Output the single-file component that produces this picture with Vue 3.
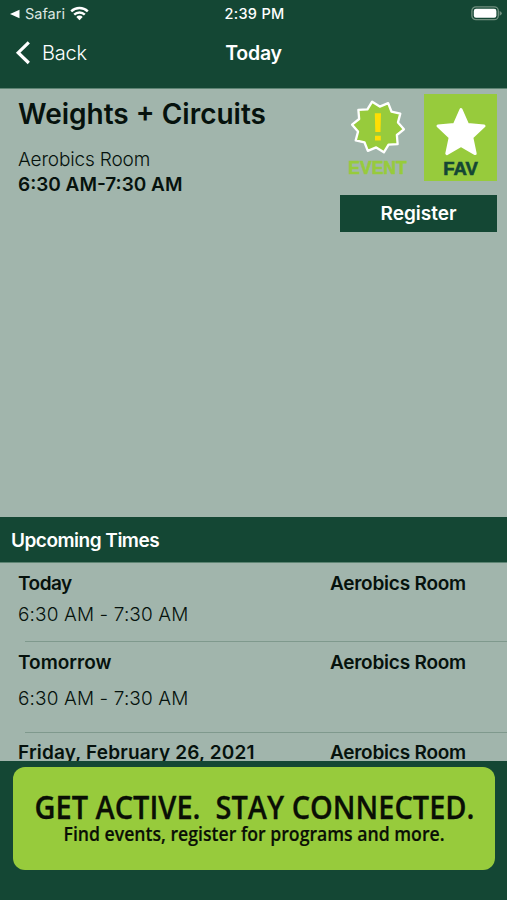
<script setup>
const times = [
  { day: 'Today', hours: '6:30 AM - 7:30 AM', room: 'Aerobics Room', kind: 'first' },
  { day: 'Tomorrow', hours: '6:30 AM - 7:30 AM', room: 'Aerobics Room', kind: 'second' },
  { day: 'Friday, February 26, 2021', hours: '6:30 AM - 7:30 AM', room: 'Aerobics Room', kind: 'third' },
]

// Ten-pointed badge outline
const burst = Array.from({ length: 20 }, (_, i) => {
  const r = i % 2 ? 20.5 : 26
  const a = ((i * 18 - 103) * Math.PI) / 180
  return `${(30 + r * Math.cos(a)).toFixed(2)},${(30 + r * Math.sin(a)).toFixed(2)}`
}).join(' ')
</script>

<template>
  <div class="screen">
    <header class="top">
      <div class="status">
        <div class="status-left">
          <svg class="tri" width="10" height="10" viewBox="0 0 10 10"><path d="M0 5 9.5 .8v8.4z" fill="#fff" /></svg>
          <span class="safari">Safari</span>
          <svg class="wifi" width="19" height="15" viewBox="0 0 19 15">
            <g fill="none" stroke="#fff" stroke-width="2.4">
              <path d="M1.2 5.4a11.8 11.8 0 0 1 16.6 0" />
              <path d="M4.2 8.7a7.5 7.5 0 0 1 10.6 0" />
            </g>
            <path d="M6.3 10.9a4.5 4.5 0 0 1 6.4 0L9.5 14.2z" fill="#fff" />
          </svg>
        </div>
        <span class="clock">2:39 PM</span>
        <svg class="battery" width="31" height="15" viewBox="0 0 31 15">
          <rect x=".9" y=".9" width="26.4" height="12.8" rx="4" fill="none" stroke="#71907f" stroke-width="1.3" />
          <rect x="2.8" y="2.8" width="22.6" height="9" rx="2.2" fill="#fff" />
          <path d="M28.6 4.9q2.2.8 2.2 2.4t-2.2 2.4z" fill="#71907f" />
        </svg>
      </div>
      <nav class="nav">
        <div class="back">
          <svg width="16" height="24" viewBox="0 0 16 24"><path d="M13.8 1.4 3.2 11.7l10.6 10.3" fill="none" stroke="#fff" stroke-width="3.2" /></svg>
          <span>Back</span>
        </div>
        <span class="nav-title">Today</span>
        <span></span>
      </nav>
    </header>

    <main class="detail">
      <section class="info">
        <h1>Weights + Circuits</h1>
        <p class="room">Aerobics Room</p>
        <p class="hours">6:30 AM-7:30 AM</p>
      </section>
      <section class="actions">
        <div class="tiles">
          <div class="event">
            <svg width="60" height="60" viewBox="0 0 60 60">
              <polygon :points="burst" fill="#97cb3c" stroke="#fff" stroke-width="2.3" stroke-linejoin="round" />
              <path d="M26.8 16.3h6.2l-.5 18.7h-5.2zM27 38.7h5.8v4.8h-5.8z" fill="#ffde05" />
            </svg>
            <span>EVENT</span>
          </div>
          <div class="fav">
            <svg width="52" height="50" viewBox="0 0 52 50">
              <path d="M26 2.6 32.5 17.4 49 19 36.8 30.3 40.2 46.6 26 38.4 11.8 46.6 15.2 30.3 3 19 19.5 17.4z" fill="#fff" stroke="#fff" stroke-width="3" stroke-linejoin="round" />
            </svg>
            <span>FAV</span>
          </div>
        </div>
        <button class="register">Register</button>
      </section>
    </main>

    <h2 class="section-title"><span>Upcoming Times</span></h2>
    <div class="list">
      <div v-for="t in times" :key="t.day" class="row" :class="t.kind">
        <div class="row-head">
          <span class="day">{{ t.day }}</span>
          <span class="place">{{ t.room }}</span>
        </div>
        <div class="row-hours">{{ t.hours }}</div>
      </div>
    </div>

    <footer class="footer">
      <svg class="banner" width="482" height="103" viewBox="0 0 482 103">
        <rect width="482" height="103" rx="12" fill="#97cb3c" />
        <text x="21.5" y="51.5" textLength="440" lengthAdjust="spacingAndGlyphs" class="slogan">GET ACTIVE.&#160; STAY CONNECTED.</text>
        <text x="50.5" y="73.5" textLength="381" lengthAdjust="spacingAndGlyphs" class="sub">Find events, register for programs and more.</text>
      </svg>
    </footer>
  </div>
</template>

<style>
body { margin: 0; background: #144734; }
</style>

<style scoped>
.screen { width: 507px; height: 900px; overflow: hidden; display: flex; flex-direction: column; background: #a1b5ac; font-family: Inter, "Liberation Sans", sans-serif; color: #06120d; }
h1, h2, p { margin: 0; }
span, h1, p { white-space: nowrap; }
.top { height: 88px; flex: none; background: #144734; border-bottom: 1px solid #5d8473; color: #fff; }
.status { height: 28px; display: grid; grid-template-columns: 1fr auto 1fr; align-items: center; padding: 0 6px 0 10px; }
.status-left { display: flex; align-items: center; }
.safari { font-size: 14.5px; line-height: 18px; margin-left: 5px; margin-top: -1px; width: 40px; color: #dce6e1; }
.wifi { margin-left: 5px; margin-top: -2px; }
.clock { font-size: 14.5px; line-height: 18px; font-weight: 500; letter-spacing: .3px; margin: -1px 2px 0 0; }
.battery { justify-self: end; margin-right: -1px; margin-top: -2px; }
.nav { height: 50px; display: grid; grid-template-columns: 1fr auto 1fr; align-items: center; padding: 0 15px; }
.back { display: flex; align-items: center; gap: 11px; font-size: 20px; font-weight: 300; letter-spacing: -.2px; }
.nav-title { font-size: 19.5px; font-weight: 600; letter-spacing: -.2px; }
.detail { height: 428px; flex: none; display: flex; justify-content: space-between; padding: 0 10px 0 18px; box-sizing: border-box; }
.info { padding-top: 8px; }
h1 { font-size: 28px; line-height: 34px; font-weight: 600; }
.room { font-size: 19px; line-height: 24px; margin-top: 17px; font-weight: 300; letter-spacing: -.15px; }
.hours { font-size: 19px; line-height: 24px; margin-top: 1px; font-weight: 600; }
.actions { width: 157px; padding-top: 5px; }
.tiles { display: flex; justify-content: space-between; padding-left: 7px; }
.event, .fav { display: flex; flex-direction: column; align-items: center; font-family: "Liberation Sans", Arial, sans-serif; font-weight: 700; }
.event { width: 61px; padding-top: 3px; color: #97cb3c; }
.event span { font-size: 17.5px; line-height: 20px; margin-top: 1px; -webkit-text-stroke: .6px #97cb3c; }
.fav { width: 73px; height: 87px; background: #97cb3c; color: #144734; }
.fav svg { margin-top: 13px; }
.fav span { font-size: 18.5px; line-height: 20px; margin-top: 2px; -webkit-text-stroke: .6px #144734; }
.register { display: block; width: 157px; height: 37px; margin: 14px 0 0; padding: 0; border: 0; background: #144734; color: #fff; font: 600 19px/37px Inter, sans-serif; }
.section-title { height: 46px; flex: none; display: flex; align-items: center; padding: 1px 11px 0; box-sizing: border-box; background: #144734; color: #fff; font-size: 19px; font-weight: 600; letter-spacing: -.5px; border-bottom: 1px solid #5d8473; }
.list { height: 198px; flex: none; overflow: hidden; }
.row { padding: 9px 41px 0 18px; box-sizing: border-box; background: linear-gradient(#7f998d, #7f998d) 25px 100% / 100% 1px no-repeat; }
.first { height: 79px; }
.second { height: 91px; }
.second { padding-top: 9px; }
.third { height: 91px; padding-top: 8px; }
.row-head { display: flex; justify-content: space-between; font-size: 19px; line-height: 24px; font-weight: 600; }
.place { letter-spacing: -.22px; }
.first .day { letter-spacing: -.5px; }
.third .day { letter-spacing: .17px; }
.row-hours { font-size: 19px; line-height: 24px; font-weight: 300; letter-spacing: .12px; margin-top: 7px; }
.second .row-hours { margin-top: 12px; }
.footer { height: 139px; flex: none; background: #144734; padding: 6px 0 0 13px; box-sizing: border-box; }
.banner { display: block; }
.slogan { font: 600 33px "Open Sans", sans-serif; fill: #0a0f05; stroke: #0a0f05; stroke-width: .3px; }
.sub { font: 600 20px "Open Sans", sans-serif; fill: #0a0f05; stroke: #0a0f05; stroke-width: .2px; }
</style>
